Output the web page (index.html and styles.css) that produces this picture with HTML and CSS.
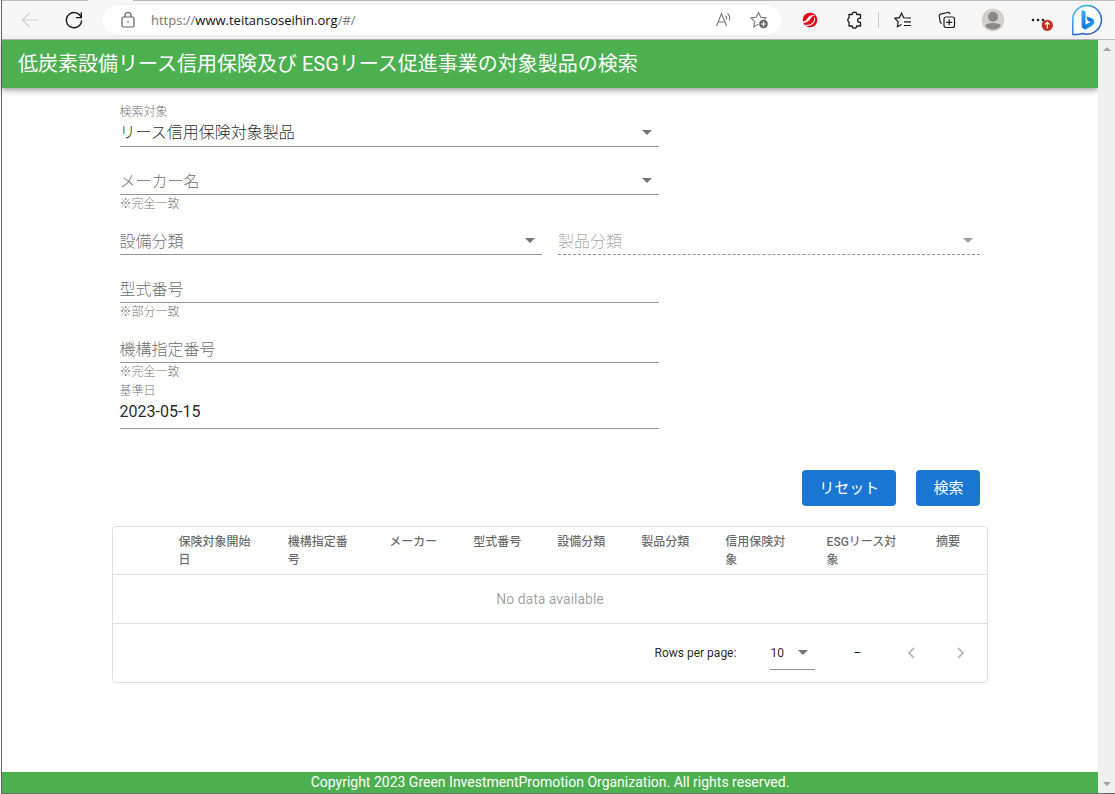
FILE: index.html
```html
<!DOCTYPE html>
<html lang="ja">
<head>
<meta charset="utf-8">
<meta name="viewport" content="width=device-width, initial-scale=1">
<title>低炭素設備リース信用保険及び ESGリース促進事業の対象製品の検索</title>
<link rel="stylesheet" href="styles.css">
</head>
<body>
<div class="window">
  <div class="tab-edge"><span class="tab-edge-left"></span><span class="tab-edge-gap"></span><span class="tab-edge-right"></span></div>
  <div class="toolbar">
    <button class="tool" type="button" aria-label="戻る" disabled>
      <svg width="18" height="18" viewBox="0 0 18 18" fill="none" stroke="#cfcfcf" stroke-width="1.2"><path d="M17 9H1.5M8.5 2L1.5 9l7 7"/></svg>
    </button>
    <button class="tool" type="button" aria-label="更新">
      <svg width="18" height="18" viewBox="0 0 18 18" fill="none" stroke="#1b1b1b" stroke-width="1.4"><path d="M16.3 7A7.6 7.6 0 1 0 16.6 9.5M16.3 1.2V6.600H11"/></svg>
    </button>
    <div class="address">
      <svg class="lock" width="14" height="16" viewBox="0 0 14 16" fill="none" stroke="#5f5f5f" stroke-width="1.2"><rect x="1" y="5" width="12" height="10" rx="1.500"/><path d="M4 5V3.500a3 3 0 0 1 6 0V5"/><circle cx="7" cy="10" r=".8" fill="#5f5f5f" stroke="none"/></svg>
      <div class="url">https://<span class="host">www.teitansoseihin.org</span>/#/</div>
      <button class="address-tool" type="button" aria-label="音声で読み上げる">
        <svg width="18" height="16" viewBox="0 0 18 16" fill="none" stroke="#777" stroke-width="1.100"><path d="M1.500 14L6.500 1.500 11.500 14M3.200 10h6.600M10.500 3.500q1.600 1.500 1 4M12.500 1.500q3 2.600 2 7"/></svg>
      </button>
      <button class="address-tool" type="button" aria-label="お気に入りに追加">
        <svg width="20" height="18" viewBox="0 0 20 18"><path d="M8.500 1.500l2.300 4.700 5.200.8-3.700 3.700.9 5-4.700-2.400-4.700 2.400.9-5L1 7l5.200-.8z" fill="none" stroke="#777" stroke-width="1.100"/><circle cx="13.500" cy="13" r="4.600" fill="#666" stroke="#fff" stroke-width=".6"/><path d="M13.500 10.500v5M11 13h5" stroke="#fff" stroke-width="1.200"/></svg>
      </button>
    </div>
    <button class="tool" type="button" aria-label="セキュリティ拡張機能">
      <svg width="16" height="16" viewBox="0 0 16 16"><circle cx="8" cy="8" r="7.300" fill="#e60012"/><path d="M.6 9.600Q3.800 9.400 5.600 6.200 8 2.600 12.800 3.200 9.600 4 8.600 6.600 7 10 2 11.200z" fill="#fff"/><path d="M3.500 13.400Q8.800 13.800 11.500 10.600 13.200 8.400 12.600 5.600" stroke="#fff" stroke-width="1.100" fill="none"/><path d="M6.400 10.900Q9.500 9.800 10.600 6.800" stroke="#e60012" stroke-width="1" fill="none"/></svg>
    </button>
    <button class="tool" type="button" aria-label="拡張機能">
      <svg width="18" height="18" viewBox="0 0 18 18" fill="none" stroke="#1b1b1b" stroke-width="1.300" stroke-linejoin="round"><path d="M4 3.500h3.200a2.300 2.300 0 0 1 4.600 0H15.500V7.300h-1a1.900 1.900 0 0 0 0 3.800h1V15H11.600a2.200 2.200 0 0 1-4.400 0H4V11.100a2.200 2.200 0 0 1 0-4z"/></svg>
    </button>
    <span class="divider"></span>
    <button class="tool" type="button" aria-label="お気に入り">
      <svg width="18" height="16" viewBox="0 0 18 16" fill="none" stroke="#1b1b1b" stroke-width="1.200"><path d="M11 6L9.700 5.700 7.500 1.200 5.400 5.600.9 6.300l3.300 3.500-.8 4.900 4.100-2.200M11.200 6H17M10 9.800H17M10 13.500H17"/></svg>
    </button>
    <button class="tool" type="button" aria-label="コレクション">
      <svg width="18" height="18" viewBox="0 0 18 18" fill="none" stroke="#1b1b1b" stroke-width="1.200"><rect x="6" y="6" width="10.500" height="10.500" rx="2"/><path d="M11.200 8.300v6M8.200 11.300h6M3.800 12.500Q2.500 12 2.200 10.800L1.200 5.200Q1 3.500 2.600 3.100L9.700 1.500Q11.500 1.200 12 3.200"/></svg>
    </button>
    <button class="tool tool-wide" type="button" aria-label="プロファイル">
      <svg width="24" height="24" viewBox="0 0 24 24"><circle cx="12" cy="12" r="11.300" fill="#d2d0ce"/><circle cx="12" cy="8.800" r="5" fill="#8a8886"/><path d="M4 17.500Q6 15 12 15t8 2.500A10 10 0 0 1 4 17.500z" fill="#8a8886"/></svg>
    </button>
    <button class="tool tool-wide" type="button" aria-label="設定など">
      <svg width="24" height="24" viewBox="0 0 24 24"><g fill="#1b1b1b"><circle cx="4" cy="12" r="1.300"/><circle cx="9" cy="12" r="1.300"/><circle cx="14" cy="12" r="1.300"/></g><circle cx="18.300" cy="17.300" r="5.600" fill="#c42b1c"/><path d="M18.300 20.500v-6M16 16.500l2.300-2.300 2.300 2.300" fill="none" stroke="#fff" stroke-width="1.200"/></svg>
    </button>
    <button class="tool" type="button" aria-label="Bing">
      <svg width="32" height="32" viewBox="0 0 32 32"><defs><linearGradient id="ring" x1="0" y1="0" x2="1" y2="1"><stop offset="0" stop-color="#2fc8ef"/><stop offset=".5" stop-color="#2c78dc"/><stop offset="1" stop-color="#2450c8"/></linearGradient><linearGradient id="bee" x1="0" y1="0" x2="1" y2="1"><stop offset="0" stop-color="#37bdf8"/><stop offset=".55" stop-color="#1b6fe0"/><stop offset="1" stop-color="#29c3ee"/></linearGradient></defs><path d="M16 1.500A14.300 14.300 0 1 1 12 29.500Q7 31 1.800 30.500V15.500A14.200 14.200 0 0 1 16 1.500z" fill="#fff" stroke="url(#ring)" stroke-width="1.500"/><path d="M10.500 6l4 1.500v13.300l5-2.700-2.800-1.400-1.500-4.500 6 2.300q2.800 1.500 1.800 5-.5 1.500-2 2.300l-6.300 3.600q-4.200-.6-4.200-4.400z" fill="url(#bee)"/></svg>
    </button>
  </div>

  <div class="viewport">
    <div class="page">
      <header class="app-bar"><h1 class="app-title">低炭素設備リース信用保険及び ESGリース促進事業の対象製品の検索</h1></header>

      <main class="content">
        <form class="search">
          <div class="field field-short">
            <label class="field-top" for="target">検索対象</label>
            <div class="control has-arrow">
              <select class="input" id="target"><option>リース信用保険対象製品</option></select>
            </div>
            <div class="foot"></div>
          </div>

          <div class="field field-short">
            <div class="field-top"></div>
            <div class="control has-arrow">
              <select class="input" id="maker" aria-describedby="maker-hint"><option></option></select>
              <label class="inner-label" for="maker">メーカー名</label>
            </div>
            <div class="foot hint" id="maker-hint">※完全一致</div>
          </div>

          <div class="pair">
            <div class="field">
              <div class="field-top"></div>
              <div class="control has-arrow">
                <select class="input" id="equipment"><option></option></select>
                <label class="inner-label" for="equipment">設備分類</label>
              </div>
              <div class="foot"></div>
            </div>
            <div class="field">
              <div class="field-top"></div>
              <div class="control has-arrow is-disabled">
                <select class="input" id="product" disabled><option></option></select>
                <label class="inner-label" for="product">製品分類</label>
              </div>
              <div class="foot"></div>
            </div>
          </div>

          <div class="field field-short">
            <div class="field-top"></div>
            <div class="control">
              <input class="input" id="model" type="text" aria-describedby="model-hint">
              <label class="inner-label" for="model">型式番号</label>
            </div>
            <div class="foot hint" id="model-hint">※部分一致</div>
          </div>

          <div class="field field-short">
            <div class="field-top"></div>
            <div class="control">
              <input class="input" id="number" type="text" aria-describedby="number-hint">
              <label class="inner-label" for="number">機構指定番号</label>
            </div>
            <div class="foot hint" id="number-hint">※完全一致</div>
          </div>

          <div class="field field-short field-date">
            <label class="field-top" for="base-date">基準日</label>
            <div class="control">
              <input class="input" id="base-date" type="text" value="2023-05-15">
            </div>
          </div>

          <div class="actions">
            <button class="btn" type="reset">リセット</button>
            <button class="btn" type="button">検索</button>
          </div>
        </form>

        <section class="results">
          <table class="table">
            <colgroup><col class="c-icon"><col class="c-start"><col class="c-number"><col class="c-std"><col class="c-std"><col class="c-std"><col class="c-std"><col class="c-number"><col class="c-start"><col class="c-note"></colgroup>
            <thead>
              <tr><td></td><th scope="col">保険対象開始日</th><th scope="col">機構指定番号</th><th scope="col">メーカー</th><th scope="col">型式番号</th><th scope="col">設備分類</th><th scope="col">製品分類</th><th scope="col">信用保険対象</th><th scope="col">ESGリース対象</th><th scope="col">摘要</th></tr>
            </thead>
            <tbody>
              <tr><td class="empty" colspan="10">No data available</td></tr>
            </tbody>
          </table>
          <div class="pager">
            <label for="rows">Rows per page:</label>
            <div class="control pager-control has-arrow">
              <select class="input" id="rows"><option>10</option></select>
            </div>
            <span class="range">–</span>
            <button class="page-btn" type="button" aria-label="前のページ" disabled><svg width="8" height="12" viewBox="0 0 8 12" fill="none" stroke="currentColor" stroke-width="1.800"><path d="M7 1L2 6l5 5"/></svg></button>
            <button class="page-btn" type="button" aria-label="次のページ" disabled><svg width="8" height="12" viewBox="0 0 8 12" fill="none" stroke="currentColor" stroke-width="1.800"><path d="M1 1l5 5-5 5"/></svg></button>
          </div>
        </section>
      </main>

      <footer class="page-footer">Copyright 2023 Green InvestmentPromotion Organization. All rights reserved.</footer>
    </div>
    <div class="scrollbar" aria-hidden="true"><span class="scroll-up"></span><span class="scroll-down"></span></div>
  </div>
</div>
</body>
</html>
```
FILE: styles.css
```css
* {
  box-sizing: border-box;
}

body {
  margin: 0;
  background: #fff;
  color: rgba(0, 0, 0, 0.87);
  font-family: Roboto, "Noto Sans CJK JP", sans-serif;
  font-size: 16px;
}

button,
input,
select {
  margin: 0;
  padding: 0;
  border: 0;
  background: none;
  color: inherit;
  font: inherit;
}

.window {
  display: flex;
  flex-direction: column;
  min-height: 100vh;
  margin-left: 1px;
  border-left: 1px solid #666;
  border-bottom: 1px solid #666;
}

/* Browser toolbar */
.tab-edge {
  display: flex;
  height: 1px;
  background: #f7f7f7;
}

.tab-edge-left {
  width: 86px;
  background: #bdbdbd;
}

.tab-edge-gap {
  width: 45px;
}

.tab-edge-right {
  flex: 1;
  background: #bdbdbd;
}

.toolbar {
  display: flex;
  align-items: center;
  height: 39px;
  padding: 0 6px;
  border-bottom: 1px solid #bdbdbd;
  background: #f7f7f7;
}

.tool {
  display: flex;
  flex: none;
  align-items: center;
  justify-content: center;
  width: 44px;
  height: 36px;
}

.tool-wide {
  width: 48px;
}

.divider {
  width: 1px;
  height: 16px;
  margin: 0 2px;
  background: #c8c8c8;
}

.address {
  display: flex;
  flex: 1;
  align-items: center;
  height: 30px;
  margin: 0 6px;
  padding: 0 4px 0 19px;
  border-radius: 15px;
  background: #fff;
  box-shadow: 0 0 2px rgba(0, 0, 0, 0.08);
}

.lock {
  flex: none;
  margin-right: 16px;
}

.url {
  flex: 1;
  color: #767676;
  font-family: "Open Sans", sans-serif;
  font-size: 13px;
}

.host {
  color: #111;
}

.address-tool {
  display: flex;
  align-items: center;
  justify-content: center;
  width: 36px;
  height: 28px;
}

/* Page */
.viewport {
  display: flex;
  flex: 1;
}

.page {
  display: flex;
  flex: 1;
  flex-direction: column;
}

.app-bar {
  padding: 8px 16px;
  background: #4caf50;
  color: #fff;
  box-shadow: 0 2px 4px -1px rgba(0, 0, 0, 0.2), 0 4px 5px rgba(0, 0, 0, 0.14), 0 1px 10px rgba(0, 0, 0, 0.12);
}

.app-title {
  margin: 0;
  font-size: 20px;
  font-weight: 400;
  line-height: 32px;
}

.content {
  flex: 1;
  width: 80%;
  margin: 0 auto;
  padding-top: 15px;
}

.search {
  padding: 0 8px;
}

.field-short {
  width: 62.7%;
}

.field-top {
  display: block;
  height: 16px;
  color: rgba(0, 0, 0, 0.6);
  font-size: 12px;
  font-weight: 300;
  line-height: 18px;
}

.pair {
  display: grid;
  grid-template-columns: 1fr 1fr;
  gap: 16px;
}

.control {
  display: grid;
  height: 28px;
  border-bottom: 1px solid #949494;
}

.control > *,
.control::after {
  grid-area: 1 / 1;
}

.input {
  width: 100%;
  min-width: 0;
  outline: 0;
  appearance: none;
}

#target {
  font-weight: 300;
}

.inner-label {
  align-self: center;
  padding-top: 2px;
  color: rgba(0, 0, 0, 0.6);
  font-weight: 300;
  line-height: 24px;
  pointer-events: none;
}

.has-arrow::after {
  content: "";
  align-self: center;
  justify-self: end;
  margin-right: 7px;
  border-top: 5px solid #757575;
  border-left: 5px solid transparent;
  border-right: 5px solid transparent;
  pointer-events: none;
}

.is-disabled {
  border-bottom: 1px dashed #949494;
}

.is-disabled .inner-label {
  color: rgba(0, 0, 0, 0.38);
}

.is-disabled::after {
  border-top-color: #9e9e9e;
}

.foot {
  height: 4px;
}

.hint {
  height: 16px;
  color: rgba(0, 0, 0, 0.6);
  font-size: 12px;
  font-weight: 300;
  line-height: 18px;
}

.field-date {
  padding-top: 4px;
}

.field-date .field-top {
  line-height: 16px;
}

.field-date .control {
  height: 30px;
  padding-bottom: 4px;
}

.actions {
  display: flex;
  justify-content: flex-end;
  gap: 20px;
  padding: 41px 0 20px;
}

.btn {
  height: 36px;
  padding: 0 17px 3px;
  border-radius: 4px;
  background: #1976d2;
  color: #fff;
  font-size: 15px;
  font-weight: 400;
}

/* Results */
.results {
  border: 1px solid #dfdfdf;
  border-radius: 4px;
}

.table {
  width: 100%;
  border-collapse: separate;
  border-spacing: 0;
  table-layout: fixed;
}

.c-icon {
  width: 5.7%;
}

.c-start {
  width: 12.5%;
}

.c-number {
  width: 11.6%;
}

.c-std {
  width: 9.6%;
}

.c-note {
  width: 7.7%;
}

.table th {
  height: 48px;
  padding: 6px 16px 5px;
  color: rgba(0, 0, 0, 0.6);
  font-size: 12px;
  font-weight: 500;
  line-height: 18px;
  text-align: left;
  vertical-align: top;
}

.table th,
.table td {
  border-bottom: 1px solid #dfdfdf;
}

.table .empty {
  height: 49px;
  padding: 0 16px;
  color: rgba(0, 0, 0, 0.38);
  font-size: 14px;
  text-align: center;
}

.pager {
  display: flex;
  align-items: center;
  justify-content: flex-end;
  height: 58px;
  padding-right: 8px;
  font-size: 12px;
}

.pager-control {
  width: 45px;
  height: 34px;
  margin: 0 32px 0 34px;
}

.range {
  width: 20px;
  text-align: center;
}

.page-btn {
  display: flex;
  align-items: center;
  justify-content: center;
  width: 36px;
  height: 36px;
  margin-left: 14px;
  color: #b8b8b8;
}

.range + .page-btn {
  margin-left: 26px;
}

.page-footer {
  background: #4caf50;
  color: #fff;
  font-size: 14px;
  font-weight: 400;
  line-height: 21px;
  text-align: center;
}

.scrollbar {
  display: flex;
  flex-direction: column;
  align-items: center;
  justify-content: space-between;
  width: 17px;
  padding: 7px 0;
  background: #f0f0f0;
}

.scroll-up,
.scroll-down {
  border-left: 4px solid transparent;
  border-right: 4px solid transparent;
}

.scroll-up {
  border-bottom: 4px solid #a3a3a3;
}

.scroll-down {
  border-top: 4px solid #a3a3a3;
}
```
